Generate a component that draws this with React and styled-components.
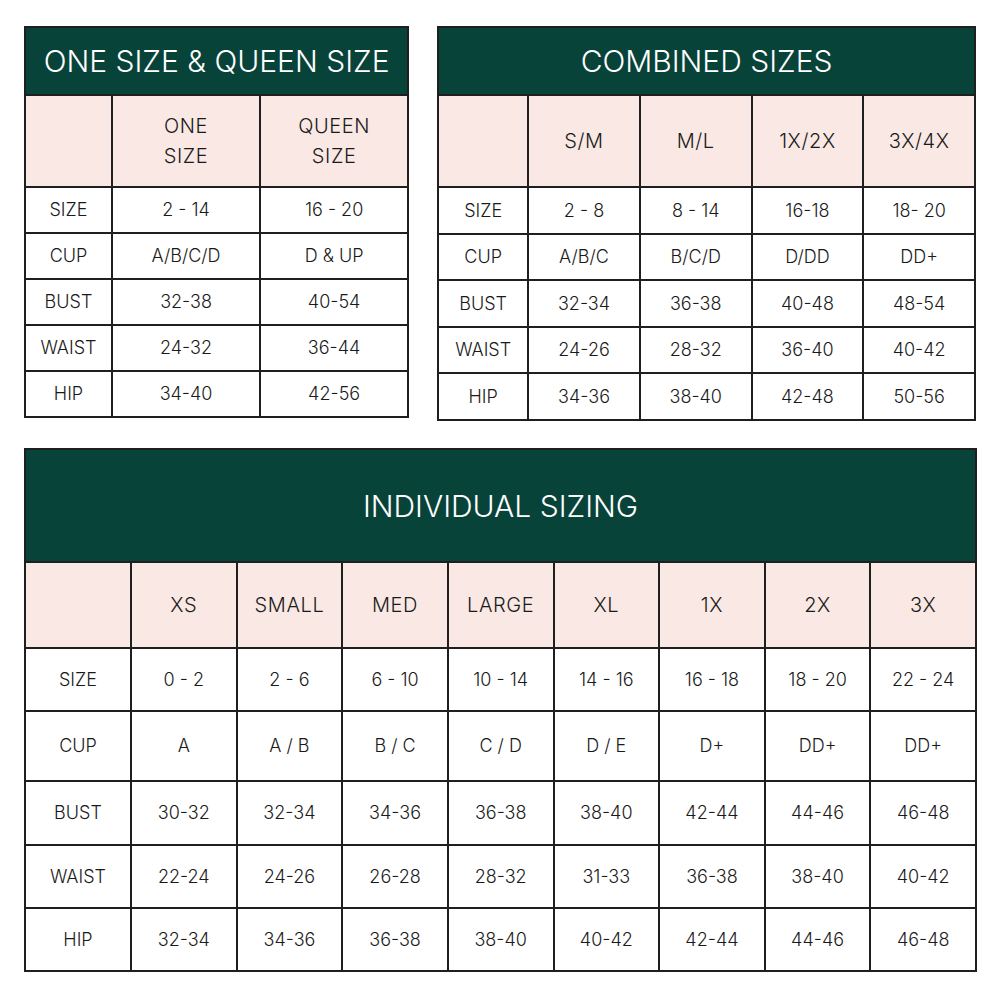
import React from 'react';
import styled, { createGlobalStyle } from 'styled-components';

// colours
const GREEN = '#08433a';
const PINK = '#f9e8e3';
const LINE = '#1f1f1f';

const GlobalStyle = createGlobalStyle`
    body {
        margin: 0;
        background: #ffffff;
        font-family: Inter, "Liberation Sans", sans-serif;
        color: #1a1a1a;
    }
`;

const Page = styled.div`
    width: 1000px;
    padding: 26px 24px 0 24px;
    box-sizing: border-box;
`;

const TopRow = styled.div`
    display: flex;
    align-items: flex-start;
    gap: 28px;
    margin-bottom: 27px;
`;

const Chart = styled.div`
    width: ${(p) => p.width}px;
    box-sizing: border-box;
`;

const Title = styled.div`
    height: ${(p) => p.height}px;
    background: ${GREEN};
    border: 2px solid ${LINE};
    border-bottom: none;
    box-sizing: border-box;
    display: flex;
    align-items: center;
    justify-content: center;
    color: #ffffff;
    font-size: 30px;
    font-weight: 300;
`;

const Table = styled.table`
    width: 100%;
    border-collapse: collapse;
    table-layout: fixed;
`;

const Cell = styled.td`
    border: 2px solid ${LINE};
    height: ${(p) => p.height}px;
    padding: 0;
    text-align: center;
    vertical-align: middle;
    font-size: ${(p) => (p.head ? 20 : 18)}px;
    font-weight: 300;
    letter-spacing: ${(p) => (p.head ? 0.6 : 0)}px;
    line-height: 30px;
    background: ${(p) => (p.head ? PINK : '#ffffff')};
    box-sizing: border-box;
`;

const SizeChart = ({ title, width, titleHeight, headHeight, rowHeights, columns, firstCol, rows }) => (
    <Chart width={width}>
        <Title height={titleHeight}>{title}</Title>
        <Table>
            <colgroup>
                <col style={{ width: firstCol }} />
                {columns.map((c) => (
                    <col key={c} />
                ))}
            </colgroup>
            <tbody>
                <tr>
                    <Cell head height={headHeight} />
                    {columns.map((c) => (
                        <Cell head key={c} height={headHeight}>
                            {c.split('\n').map((line) => (
                                <div key={line}>{line}</div>
                            ))}
                        </Cell>
                    ))}
                </tr>
                {rows.map((row, i) => (
                    <tr key={row[0]}>
                        {row.map((v, j) => (
                            <Cell key={j} height={rowHeights[i]}>
                                {v}
                            </Cell>
                        ))}
                    </tr>
                ))}
            </tbody>
        </Table>
    </Chart>
);

const App = () => (
    <Page>
        <GlobalStyle />
        <TopRow>
            <SizeChart
                title="ONE SIZE & QUEEN SIZE"
                width={386}
                titleHeight={68}
                headHeight={92}
                rowHeights={[46, 46, 46, 46, 46]}
                firstCol={87}
                columns={['ONE\nSIZE', 'QUEEN\nSIZE']}
                rows={[
                    ['SIZE', '2 - 14', '16 - 20'],
                    ['CUP', 'A/B/C/D', 'D & UP'],
                    ['BUST', '32-38', '40-54'],
                    ['WAIST', '24-32', '36-44'],
                    ['HIP', '34-40', '42-56'],
                ]}
            />
            <SizeChart
                title="COMBINED SIZES"
                width={540}
                titleHeight={68}
                headHeight={92}
                rowHeights={[47, 46, 47, 46, 47]}
                firstCol={90}
                columns={['S/M', 'M/L', '1X/2X', '3X/4X']}
                rows={[
                    ['SIZE', '2 - 8', '8 - 14', '16-18', '18- 20'],
                    ['CUP', 'A/B/C', 'B/C/D', 'D/DD', 'DD+'],
                    ['BUST', '32-34', '36-38', '40-48', '48-54'],
                    ['WAIST', '24-26', '28-32', '36-40', '40-42'],
                    ['HIP', '34-36', '38-40', '42-48', '50-56'],
                ]}
            />
        </TopRow>
        <SizeChart
            title="INDIVIDUAL SIZING"
            width={953}
            titleHeight={113}
            headHeight={86}
            rowHeights={[63, 70, 64, 63, 63]}
            firstCol={106}
            columns={['XS', 'SMALL', 'MED', 'LARGE', 'XL', '1X', '2X', '3X']}
            rows={[
                ['SIZE', '0 - 2', '2 - 6', '6 - 10', '10 - 14', '14 - 16', '16 - 18', '18 - 20', '22 - 24'],
                ['CUP', 'A', 'A / B', 'B / C', 'C / D', 'D / E', 'D+', 'DD+', 'DD+'],
                ['BUST', '30-32', '32-34', '34-36', '36-38', '38-40', '42-44', '44-46', '46-48'],
                ['WAIST', '22-24', '24-26', '26-28', '28-32', '31-33', '36-38', '38-40', '40-42'],
                ['HIP', '32-34', '34-36', '36-38', '38-40', '40-42', '42-44', '44-46', '46-48'],
            ]}
        />
    </Page>
);

export default App;
